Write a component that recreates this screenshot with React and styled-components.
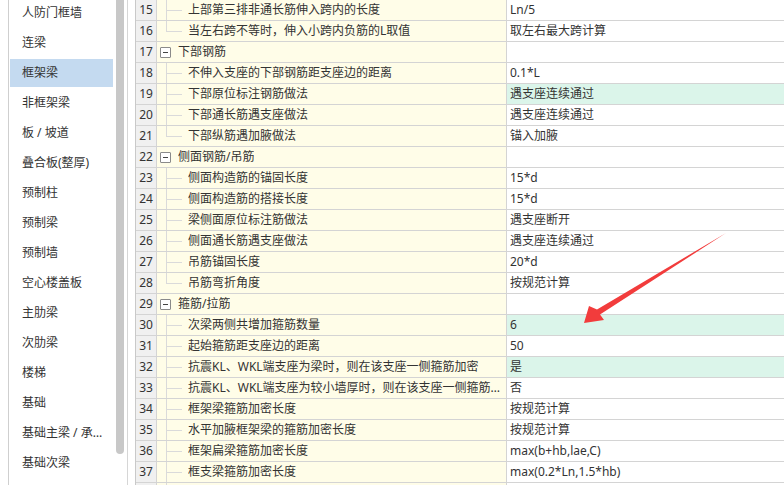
import styled, { createGlobalStyle } from "styled-components";

const GlobalStyle = createGlobalStyle`
  html, body {
    margin: 0;
    padding: 0;
    background: #ffffff;
    overflow: hidden;
  }
  body {
    font-family: "Noto Sans", "Noto Sans CJK SC", sans-serif;
    font-size: 12px;
    color: #333333;
  }
`;

const sideItems = [
  "人防门框墙",
  "连梁",
  "框架梁",
  "非框架梁",
  "板 / 坡道",
  "叠合板(整厚)",
  "预制柱",
  "预制梁",
  "预制墙",
  "空心楼盖板",
  "主肋梁",
  "次肋梁",
  "楼梯",
  "基础",
  "基础主梁 / 承台梁",
  "基础次梁",
];

// kind: g = group, c = child, l = last child of a group
const rows = [
  { no: 15, kind: "c", name: "上部第三排非通长筋伸入跨内的长度", value: "Ln/5" },
  { no: 16, kind: "l", name: "当左右跨不等时，伸入小跨内负筋的L取值", value: "取左右最大跨计算" },
  { no: 17, kind: "g", name: "下部钢筋", value: "" },
  { no: 18, kind: "c", name: "不伸入支座的下部钢筋距支座边的距离", value: "0.1*L" },
  { no: 19, kind: "c", name: "下部原位标注钢筋做法", value: "遇支座连续通过", hl: true },
  { no: 20, kind: "c", name: "下部通长筋遇支座做法", value: "遇支座连续通过" },
  { no: 21, kind: "l", name: "下部纵筋遇加腋做法", value: "锚入加腋" },
  { no: 22, kind: "g", name: "侧面钢筋/吊筋", value: "" },
  { no: 23, kind: "c", name: "侧面构造筋的锚固长度", value: "15*d" },
  { no: 24, kind: "c", name: "侧面构造筋的搭接长度", value: "15*d" },
  { no: 25, kind: "c", name: "梁侧面原位标注筋做法", value: "遇支座断开" },
  { no: 26, kind: "c", name: "侧面通长筋遇支座做法", value: "遇支座连续通过" },
  { no: 27, kind: "c", name: "吊筋锚固长度", value: "20*d" },
  { no: 28, kind: "l", name: "吊筋弯折角度", value: "按规范计算" },
  { no: 29, kind: "g", name: "箍筋/拉筋", value: "" },
  { no: 30, kind: "c", name: "次梁两侧共增加箍筋数量", value: "6", hl: true },
  { no: 31, kind: "c", name: "起始箍筋距支座边的距离", value: "50" },
  { no: 32, kind: "c", name: "抗震KL、WKL端支座为梁时，则在该支座一侧箍筋加密", value: "是", hl: true },
  { no: 33, kind: "c", name: "抗震KL、WKL端支座为较小墙厚时，则在该支座一侧箍筋加密", value: "否" },
  { no: 34, kind: "c", name: "框架梁箍筋加密长度", value: "按规范计算" },
  { no: 35, kind: "c", name: "水平加腋框架梁的箍筋加密长度", value: "按规范计算" },
  { no: 36, kind: "c", name: "框架扁梁箍筋加密长度", value: "max(b+hb,lae,C)" },
  { no: 37, kind: "c", name: "框支梁箍筋加密长度", value: "max(0.2*Ln,1.5*hb)" },
  { no: 38, kind: "c", name: "", value: "" },
];

const Page = styled.div`
  position: relative;
  display: flex;
  height: 485px;
  width: 784px;
  overflow: hidden;
  padding-left: 8px;
  box-sizing: border-box;
`;

const Sidebar = styled.div`
  display: flex;
  width: 118px;
  flex-shrink: 0;
  border-left: 1px solid #cfcfcf;
  border-right: 1px solid #d6d6d6;
  height: 100%;
`;

const SideList = styled.ul`
  list-style: none;
  display: flex;
  flex-direction: column;
  margin: -2px 0 0 0;
  padding: 0;
  width: 107px;
`;

const SideItem = styled.li`
  flex-shrink: 0;
  height: 28px;
  line-height: 28px;
  margin: 1px 3px 1px 1px;
  padding: 0 4px 0 12px;
  background: ${(p) => (p.$active ? "#c4daf0" : "transparent")};
  white-space: nowrap;
  overflow: hidden;
  text-overflow: ellipsis;
  color: #333333;
`;

const ScrollTrack = styled.div`
  width: 8px;
  padding-right: 2px;
`;

const ScrollThumb = styled.div`
  height: 454px;
  background: #c8c8c8;
  border-radius: 0 0 4px 4px;
`;

const Grid = styled.div`
  margin-left: 7px;
  flex: 1;
  border-left: 1px solid #c9c9c9;
  display: flex;
  flex-direction: column;
`;

const Row = styled.div`
  display: grid;
  grid-template-columns: 21px 350px 1fr;
  height: 20px;
  flex-shrink: 0;
  border-bottom: 1px solid #d4d4d4;
`;

const NoCell = styled.div`
  background: #f0f0f0;
  border-right: 1px solid #d4d4d4;
  text-align: center;
  line-height: 20px;
  font-size: 12px;
  color: #333333;
`;

const NameCell = styled.div`
  position: relative;
  display: flex;
  align-items: center;
  background: #fffde8;
  border-right: 1px solid #d4d4d4;
  padding-left: ${(p) => (p.$group ? "3px" : "31px")};
  padding-right: 4px;
  min-width: 0;
  overflow: hidden;
`;

const NameText = styled.span`
  white-space: nowrap;
  overflow: hidden;
  text-overflow: ellipsis;
  line-height: 20px;
  margin-left: ${(p) => (p.$group ? "7px" : "0")};
`;

const Toggle = styled.span`
  flex-shrink: 0;
  width: 9px;
  height: 9px;
  border: 1px solid #8a8a8a;
  border-radius: 1px;
  background: #ffffff;
  display: flex;
  align-items: center;
  justify-content: center;
  &::after {
    content: "";
    width: 5px;
    height: 1px;
    background: #444444;
  }
`;

const TreeV = styled.span`
  position: absolute;
  left: 9px;
  top: 0;
  width: 1px;
  height: ${(p) => (p.$last ? "10px" : "21px")};
  background: #dadada;
`;

const TreeH = styled.span`
  position: absolute;
  left: 9px;
  top: 10px;
  width: 16px;
  height: 1px;
  background: #dadada;
`;

const ValueCell = styled.div`
  background: ${(p) => (p.$hl ? "#dbf5ea" : "#ffffff")};
  padding-left: 3px;
  line-height: 20px;
  white-space: nowrap;
  overflow: hidden;
`;

const ArrowLayer = styled.svg`
  position: absolute;
  left: 0;
  top: 0;
  pointer-events: none;
`;

function TreeRow({ row }) {
  const group = row.kind === "g";
  return (
    <Row>
      <NoCell>{row.no}</NoCell>
      <NameCell $group={group}>
        {group ? (
          <Toggle />
        ) : (
          <>
            <TreeV $last={row.kind === "l"} />
            <TreeH />
          </>
        )}
        <NameText $group={group}>{row.name}</NameText>
      </NameCell>
      <ValueCell $hl={row.hl}>{row.value}</ValueCell>
    </Row>
  );
}

export default function App() {
  return (
    <>
      <GlobalStyle />
      <Page>
        <Sidebar>
          <SideList>
            {sideItems.map((item) => (
              <SideItem key={item} $active={item === "框架梁"}>
                {item}
              </SideItem>
            ))}
          </SideList>
          <ScrollTrack>
            <ScrollThumb />
          </ScrollTrack>
        </Sidebar>
        <Grid>
          {rows.map((row) => (
            <TreeRow key={row.no} row={row} />
          ))}
        </Grid>
        <ArrowLayer width="784" height="485" viewBox="0 0 784 485">
          <polygon
            points="584,323 604,320 600,314.5 726,233 597,309.5 589,306"
            fill="#f23c3c"
          />
        </ArrowLayer>
      </Page>
    </>
  );
}
